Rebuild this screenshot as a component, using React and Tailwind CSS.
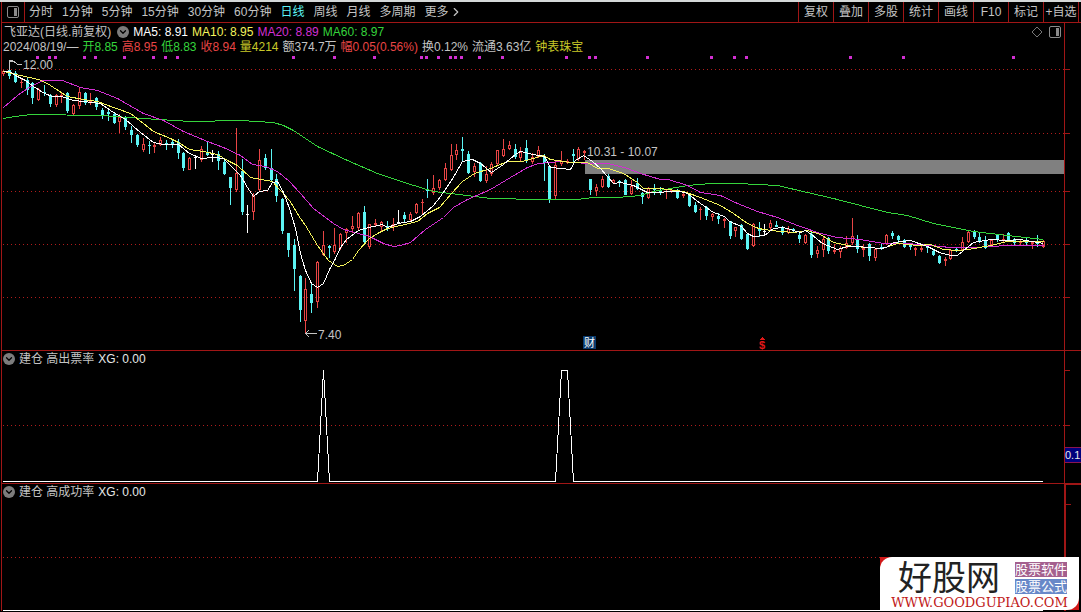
import { ChevronDown, ChevronRight } from "lucide-react";

const periods = [
  "分时",
  "1分钟",
  "5分钟",
  "15分钟",
  "30分钟",
  "60分钟",
  "日线",
  "周线",
  "月线",
  "多周期",
];

const tools = ["复权", "叠加", "多股", "统计", "画线", "F10", "标记", "+自选"];

const averages = [
  { text: "MA5: 8.91", color: "text-white" },
  { text: "MA10: 8.95", color: "text-[#f4f45c]" },
  { text: "MA20: 8.89", color: "text-[#d22fd2]" },
  { text: "MA60: 8.97", color: "text-[#35d43c]" },
];

const quote = [
  { text: "2024/08/19/—", color: "text-[#c4c4c4]" },
  { text: "开8.85", color: "text-[#35d43c]" },
  { text: "高8.95", color: "text-[#e84545]" },
  { text: "低8.83", color: "text-[#35d43c]" },
  { text: "收8.94", color: "text-[#e84545]" },
  { text: "量4214", color: "text-[#c8c828]" },
  { text: "额374.7万", color: "text-[#c4c4c4]" },
  { text: "幅0.05(0.56%)", color: "text-[#e84545]" },
  { text: "换0.12%", color: "text-[#c4c4c4]" },
  { text: "流通3.63亿", color: "text-[#c4c4c4]" },
  { text: "钟表珠宝", color: "text-[#c8c828]" },
];

// kind, high, body top, body bottom, low
const candles = `
r 70 71 74 76|c 60 70 76 79|c 71 73 82 83|r 79 82 83 88|c 78 80 90 95|c 82 83 98 104
r 88 89 100 101|c 85 92 93 96|c 94 95 104 107|r 94 95 105 107|r 93 95 96 103|c 92 93 111 113
r 104 105 114 116|r 88 92 106 109|c 92 93 103 105|r 93 101 103 105|c 97 98 107 110|c 108 110 115 119
c 109 112 114 121|c 113 114 123 124|r 114 117 122 133|c 116 117 127 130|c 126 130 135 143|c 134 135 145 147
r 138 144 150 152|c 141 145 146 154|r 143 145 147 153|r 137 140 145 146|c 140 143 145 150|c 140 142 144 148
c 139 142 153 159|c 152 153 168 171|r 157 158 170 170|w 155 157 157 169|r 146 149 160 162|c 141 152 155 156
w 150 154 155 162|c 151 154 161 170|c 158 162 174 175|c 177 177 188 205|r 128 173 190 192|c 159 171 212 215
w 205 214 215 233|r 193 196 212 220|r 149 160 190 192|c 154 158 168 170|c 149 168 180 181|c 174 179 196 202
c 198 199 231 234|c 233 233 250 257|c 239 245 269 291|c 275 276 310 322|r 278 289 321 333|c 282 294 303 313
r 261 262 302 308|r 231 245 255 256|c 245 246 248 258|r 228 245 252 254|r 233 234 248 250|r 228 229 233 243
r 216 226 229 233|r 212 213 228 230|c 206 212 242 244|r 224 224 247 249|r 219 223 225 227|r 221 222 227 232
c 221 226 228 231|r 218 224 227 231|w 210 222 223 224|c 212 215 219 223|r 212 214 220 221|r 203 204 213 214
r 199 202 203 214|c 179 190 191 198|r 175 188 193 195|r 179 180 188 190|r 163 168 180 181|r 144 155 170 171
r 144 150 155 160|c 137 149 151 161|c 151 154 173 174|r 163 166 172 177|c 162 163 181 182|r 166 174 181 183
r 162 164 174 176|r 150 150 164 165|r 139 149 156 157|r 141 145 149 150|c 144 149 157 159|r 147 152 158 161
c 140 148 160 163|r 153 157 162 164|r 146 150 157 158|c 154 156 163 181|c 165 166 199 203|r 160 165 196 199
r 151 161 164 166|r 159 161 163 164|c 149 154 156 164|r 147 149 159 161|r 150 151 153 160|c 179 179 190 195
r 184 187 191 196|r 176 179 187 188|c 174 176 187 188|r 179 180 183 184|c 180 181 182 187|c 179 180 195 195
r 180 186 194 195|c 178 183 189 190|c 192 193 197 204|r 187 188 198 199|c 184 188 190 195|c 187 190 192 195
r 189 191 192 199|r 188 190 192 193|c 189 190 198 199|r 193 194 196 198|c 194 195 206 207|c 202 205 212 213
r 207 209 210 220|c 206 207 216 220|r 213 214 217 221|c 213 216 219 224|r 218 219 221 228|c 221 221 236 239
r 227 227 231 237|c 224 225 239 240|c 233 234 249 250|r 223 224 246 247|c 222 228 231 237|w 224 231 232 236
r 220 223 228 230|c 221 225 227 227|c 226 227 233 235|r 226 229 233 234|c 228 229 231 232|c 232 235 239 243
r 234 235 243 244|c 232 234 255 258|r 246 250 254 258|r 237 239 250 257|c 237 238 251 254|r 244 250 252 254
r 246 248 252 258|r 236 243 248 249|r 218 236 243 245|c 235 239 249 253|r 244 248 250 257|c 243 244 256 261
r 248 249 258 261|c 244 247 249 250|r 234 235 244 245|c 231 233 236 239|c 235 236 240 244|c 239 240 247 248
c 244 245 247 250|r 247 248 250 256|r 246 248 250 252|c 245 246 248 253|c 250 251 255 256|c 255 256 263 264
r 257 259 261 266|r 249 250 259 260|c 248 249 251 252|r 237 242 250 251|r 231 232 242 243|c 230 231 237 239
c 232 237 242 243|c 236 241 248 249|r 239 240 245 246|c 234 235 240 242|r 234 239 241 242|c 232 233 240 241
c 238 239 243 245|r 239 241 243 246|c 238 241 243 246|r 241 242 244 249|c 235 242 244 247|r 240 241 247 248`
  .trim()
  .split(/[|\n]/)
  .map((row) => {
    const [kind, ...values] = row.split(" ");
    return [kind, ...values.map(Number)];
  });

const lines = [
  {
    color: "#35d43c",
    points:
      "3,118 15,116 30,114 100,115 143,118 190,121 240,120 273,122 283,125 293,130 317,146 347,160 377,173 407,183 433,191 467,195 490,198 540,199 577,199 593,197 617,197 640,195 653,191 687,185 710,183 737,183 777,185 807,192 833,198 860,205 887,212 907,215 933,223 973,231 1007,235 1043,239",
  },
  {
    color: "#d22fd2",
    points:
      "3,107 17,95 30,86 43,80 62,80 80,87 97,90 117,98 143,113 163,120 183,131 207,141 223,147 240,155 252,164 265,166 277,171 289,181 300,193 313,208 333,223 343,229 358,233 369,236 383,243 393,246 400,245 410,242 425,229 443,217 453,207 467,199 490,189 510,177 527,167 538,163 560,161 587,163 608,163 627,168 640,173 660,179 668,179 687,185 700,192 720,195 737,203 757,211 777,217 797,225 820,233 837,237 860,239 883,243 907,243 930,245 950,247 973,247 990,246 1007,245 1043,245",
  },
  {
    color: "#f4f45c",
    points:
      "3,71 20,75 38,79 47,83 53,87 67,96 83,99 97,101 113,107 130,113 143,123 153,131 170,138 178,142 189,149 203,151 217,154 227,160 237,165 250,177 272,181 280,190 289,200 300,218 305,225 317,245 328,260 337,266 343,265 352,259 358,250 369,238 377,233 387,228 400,225 417,221 427,213 439,207 451,193 462,181 474,173 490,168 507,161 522,161 543,155 550,159 570,162 587,162 597,168 608,168 623,173 637,182 643,188 660,188 683,191 700,197 720,205 733,213 747,223 758,228 770,230 793,232 807,230 820,234 833,242 843,244 853,246 882,248 897,243 917,245 930,244 943,249 957,250 968,249 990,245 1007,241 1027,241 1043,241",
  },
  {
    color: "#ffffff",
    points:
      "3,71 9,71 15,75 25,80 33,86 44,93 52,96 61,96 73,100 83,101 100,103 110,110 125,119 140,132 153,142 163,144 178,144 189,153 201,158 213,157 223,158 233,168 240,175 247,187 253,196 259,191 267,190 272,182 277,181 283,192 289,208 295,228 300,253 305,270 311,283 317,287 323,283 329,269 335,258 340,247 346,239 358,230 364,228 382,224 387,227 398,223 410,221 420,216 433,205 440,196 451,180 462,161 472,159 480,163 491,172 503,164 515,154 520,151 533,154 544,156 550,167 570,169 575,160 583,155 592,161 600,168 613,183 620,182 633,185 647,192 680,191 687,193 700,203 713,212 724,216 729,221 741,226 747,233 753,236 764,235 773,228 783,227 800,232 805,230 811,234 822,243 837,249 847,246 857,246 880,248 886,247 893,242 910,240 927,246 939,252 950,255 957,255 963,250 973,242 990,239 1007,240 1020,239 1043,243",
  },
];

const signals = [
  37, 49, 55, 84, 95, 124, 153, 165, 177, 293, 334, 374, 421, 426, 438, 450,
  455, 461, 479, 502, 566, 589, 595, 647, 711, 734, 746, 850, 903, 1013,
];

const candleColors = { r: "#e84545", c: "#5cf4f4", w: "#ffffff" };

function Candle({ index, data }) {
  const [kind, high, top, bottom, low] = data;
  const x = Math.round(3.3 + index * 5.81);
  const color = candleColors[kind];
  const height = Math.max(bottom - top, 1);

  if (kind === "r" && height > 2) {
    return (
      <g stroke={color} fill="none">
        <path d={`M${x + 0.5} ${high}V${top}M${x + 0.5} ${bottom}V${low}`} />
        <rect x={x - 0.5} y={top + 0.5} width="2" height={height - 1} />
      </g>
    );
  }
  return (
    <g fill={color}>
      <rect x={x} y={high} width="1" height={low - high} />
      <rect x={x - 1} y={top} width="3" height={height} />
    </g>
  );
}

function GridLine({ y }) {
  return (
    <path
      d={`M3 ${y + 0.5}H1064`}
      stroke="#b01c1c"
      strokeDasharray="1 3"
      fill="none"
    />
  );
}

function Axis({ top, height, ticks }) {
  return (
    <svg
      className="absolute inset-0 h-full w-full"
      viewBox={`0 ${top} 16 ${height}`}
      preserveAspectRatio="none"
      shapeRendering="crispEdges"
    >
      {ticks.map((y) => (
        <path key={y} d={`M0 ${y + 0.5}H5`} stroke="#a01616" />
      ))}
    </svg>
  );
}

function PanelIcon() {
  return (
    <svg className="h-3 w-3 shrink-0" viewBox="0 0 12 12" fill="none">
      <rect x="0.5" y="0.5" width="11" height="11" rx="1.5" stroke="#8a8a8a" />
      <rect x="7" y="2" width="3" height="8" fill="#8a8a8a" />
    </svg>
  );
}

function Toggle({ label }) {
  return (
    <button
      aria-label={label}
      className="flex h-3 w-3 shrink-0 items-center justify-center rounded-full bg-[#7c7c7c] text-black"
    >
      <ChevronDown size={10} strokeWidth={3} />
    </button>
  );
}

function Toolbar() {
  return (
    <nav className="flex h-[21px] items-stretch justify-between border-b border-[#a01616] text-[#c4c4c4]">
      <div className="flex items-center">
        <button
          aria-label="侧栏"
          className="flex w-[23px] items-center justify-center self-stretch border-r border-[#a01616]"
        >
          <PanelIcon />
        </button>
        <div className="flex items-center gap-[9px] pl-1">
          {periods.map((item) => (
            <button
              key={item}
              className={
                item === "日线"
                  ? "whitespace-nowrap text-[#5cf4f4]"
                  : "whitespace-nowrap"
              }
            >
              {item}
            </button>
          ))}
          <button className="flex items-center whitespace-nowrap">
            更多
            <ChevronRight size={14} strokeWidth={2} />
          </button>
        </div>
      </div>
      <div className="mr-0.5 flex border-r border-[#a01616]">
        {tools.map((item) => (
          <button
            key={item}
            className="w-[35px] whitespace-nowrap border-l border-[#a01616] text-center"
          >
            {item}
          </button>
        ))}
      </div>
    </nav>
  );
}

function PricePanel() {
  return (
    <section className="flex border-b border-[#a01616]">
      <div className="min-w-0 flex-1">
        <header className="pt-px whitespace-nowrap">
          <div className="flex h-4 items-center justify-between pr-[3px] pl-0.5">
            <div className="flex items-center gap-1">
              <h1 className="mr-0.5 text-[#c4c4c4]">飞亚达(日线.前复权)</h1>
              <Toggle label="指标菜单" />
              {averages.map((item) => (
                <span key={item.text} className={item.color}>
                  {item.text}
                </span>
              ))}
            </div>
            <div className="flex items-center gap-1.5">
              <svg className="h-3 w-3" viewBox="0 0 12 12" fill="none">
                <path d="M6 1L11 6L6 11L1 6Z" stroke="#777777" />
              </svg>
              <PanelIcon />
            </div>
          </div>
          <div className="flex h-3.5 items-center gap-1 pl-px">
            {quote.map((item) => (
              <span key={item.text} className={item.color}>
                {item.text}
              </span>
            ))}
          </div>
        </header>
        <svg
          className="block h-auto w-full"
          viewBox="2 54 1062 296"
          shapeRendering="crispEdges"
        >
          {[69, 133, 191, 244, 297].map((y) => (
            <GridLine key={y} y={y} />
          ))}
          <rect x="585" y="160" width="479" height="14" fill="#808080" />
          {signals.map((x) => (
            <rect key={x} x={x - 1} y="56" width="3" height="3" fill="#d22fd2" />
          ))}
          {candles.map((item, index) => (
            <Candle key={index} index={index} data={item} />
          ))}
          <g transform="translate(0.5 0.5)" fill="none">
            {lines.map((line) => (
              <polyline
                key={line.color}
                points={line.points}
                stroke={line.color}
              />
            ))}
          </g>
          <g stroke="#c4c4c4" fill="none">
            <path d="M9.5 70V60M9 60.5H13M10 61.5H14L18 64.5H22" />
            <path d="M305 333.5H317M309 330L305.5 333.5L309 337" />
          </g>
          <g fill="#c4c4c4" fontSize="12">
            <text x="23" y="69">12.00</text>
            <text x="318" y="339">7.40</text>
            <text x="587" y="156">10.31 - 10.07</text>
          </g>
          <rect x="583" y="336" width="13" height="13" fill="#0a3a6c" />
          <text x="584" y="347" fontSize="11" fill="#ffffff">
            财
          </text>
          <path d="M760 340L762.5 337L765 340Z" fill="#e01818" />
          <text x="759" y="349" fontSize="11" fontWeight="700" fill="#e01818">
            $
          </text>
        </svg>
      </div>
      <div className="relative w-[17px] border-l border-[#a01616]">
        <Axis top={23} height={327} ticks={[69, 133, 191, 244, 297]} />
      </div>
    </section>
  );
}

function IndicatorHeader({ name }) {
  return (
    <header className="flex h-[15px] items-center gap-1 pl-px whitespace-nowrap">
      <Toggle label={name} />
      <h2 className="text-[#c4c4c4]">{name}</h2>
      <span className="text-[#e8e8e8]">XG: 0.00</span>
    </header>
  );
}

function SignalPanel() {
  return (
    <section className="flex border-b border-[#a01616]">
      <div className="min-w-0 flex-1">
        <IndicatorHeader name="建仓 高出票率" />
        <svg
          className="block h-auto w-full"
          viewBox="2 366 1062 117"
          shapeRendering="crispEdges"
        >
          <GridLine y={425} />
          <path
            d="M3 481.5H317.5L323.5 370L329.5 481.5H555.5L561.5 370.5H567.5L573.5 481.5H1043"
            stroke="#ffffff"
            fill="none"
          />
        </svg>
      </div>
      <div className="relative w-[17px] border-l border-[#a01616]">
        <Axis top={351} height={132} ticks={[370, 425]} />
        <span className="absolute right-0 bottom-5 left-0 h-4 border-y border-[#8c1450] bg-[#00007c] text-[11px] text-[#e8e8e8]">
          0.1
        </span>
      </div>
    </section>
  );
}

function SuccessPanel() {
  return (
    <section className="flex">
      <div className="min-w-0 flex-1">
        <IndicatorHeader name="建仓 高成功率" />
        <svg
          className="block h-auto w-full"
          viewBox="2 499 1062 112"
          shapeRendering="crispEdges"
        >
          <GridLine y={557} />
          <path d="M3 610.5H1043" stroke="#ffffff" />
        </svg>
      </div>
      <div className="relative w-[17px] border-t border-l-2 border-[#a01616]">
        <Axis top={484} height={128} ticks={[503]} />
      </div>
    </section>
  );
}

function SiteBadge() {
  return (
    <a
      href="#"
      className="absolute right-0.5 bottom-0.5 w-[199px] bg-[#d01818]"
    >
      <div className="flex h-[53px] flex-col rounded-tl-xl rounded-br-xl bg-white">
        <div className="flex h-[38px] items-center justify-between pt-1 pr-3 pl-[18px]">
          <span className="text-[34px] leading-[34px] text-[#222222]">
            好股网
          </span>
          <span className="flex flex-col gap-0.5 text-[13px] leading-[15px] text-white">
            <span className="bg-[#a4608e]">股票软件</span>
            <span className="bg-[#6888c8]">股票公式</span>
          </span>
        </div>
        <span className="text-center font-['DejaVu_Serif',serif] text-[13px] leading-[15px] text-[#c01818]">
          WWW.GOODGUPIAO.COM
        </span>
      </div>
    </a>
  );
}

export default function App() {
  return (
    <div className="relative min-h-screen overflow-hidden bg-black font-['Liberation_Sans','Noto_Sans_CJK_SC',sans-serif] text-[12px] leading-[14px]">
      <div className="h-0.5 bg-[#d4d8d8]" />
      <main className="ml-px border-l border-[#a01616]">
        <Toolbar />
        <PricePanel />
        <SignalPanel />
        <SuccessPanel />
      </main>
      <SiteBadge />
    </div>
  );
}
